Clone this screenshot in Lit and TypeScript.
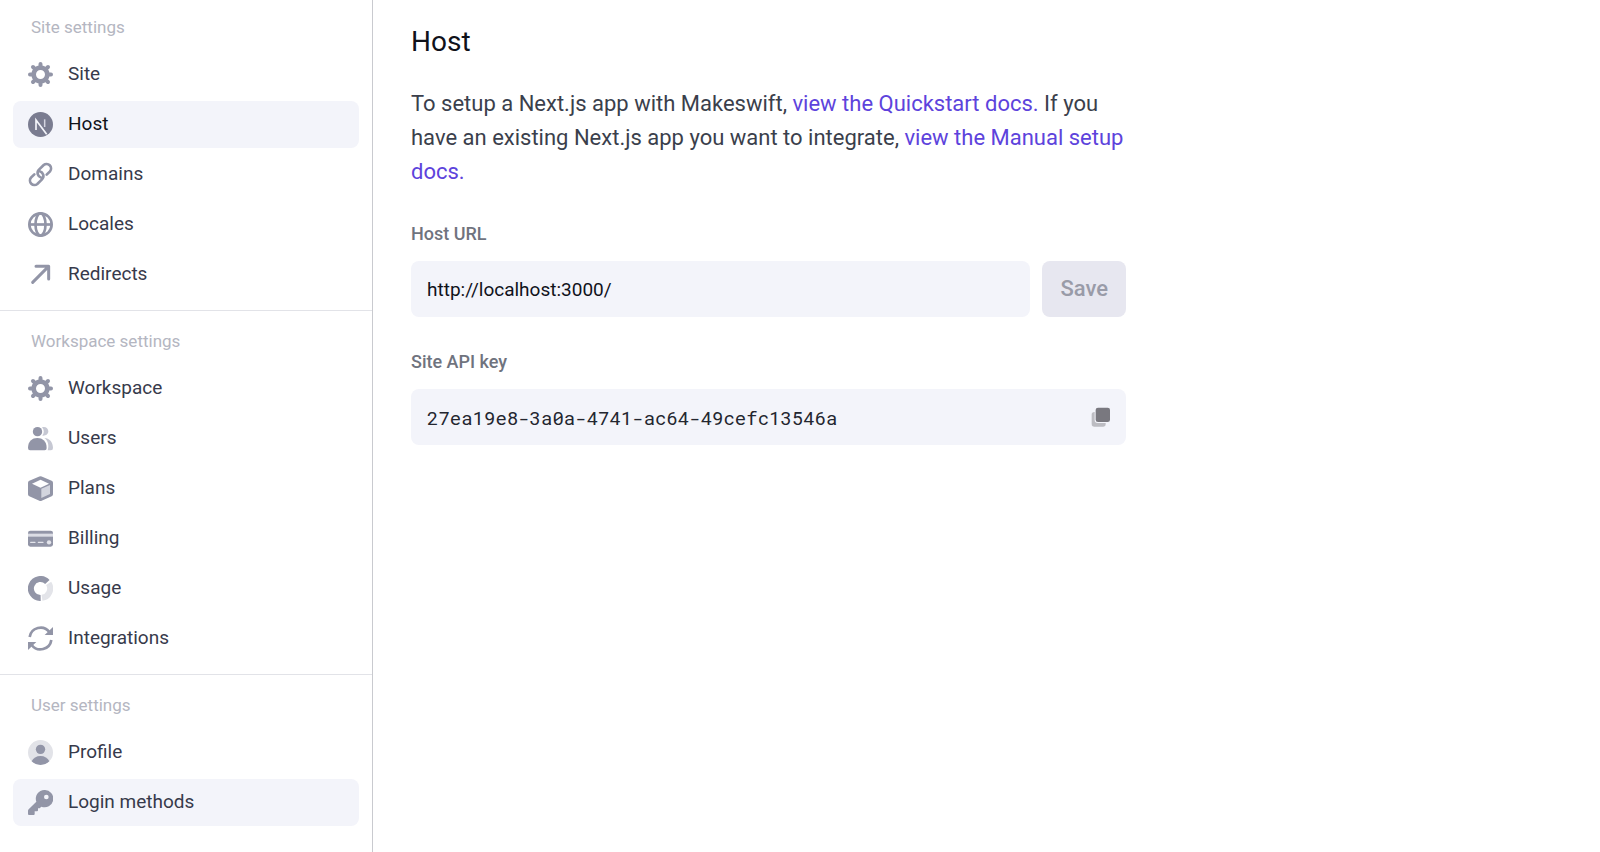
import { LitElement, html, css, svg } from "lit";
import { customElement, property, state } from "lit/decorators.js";
import { classMap } from "lit/directives/class-map.js";

const gear = svg`
  <g fill="none" stroke="currentColor">
    <circle cx="37.5" cy="37.5" r="20.5" stroke-width="14"/>
    <path stroke-width="12" stroke-linecap="round" d="M37.500 14V6M37.500 61V69M14 37.500H6M61 37.500H69M20 20L15 15M55 20L60 15M20 55L15 60M55 55L60 60"/>
  </g>`;

const icons: Record<string, unknown> = {
  gear,
  next: svg`
    <circle cx="37.5" cy="37.5" r="37.5" fill="#7a7c90"/>
    <path d="M24 54V24L56 67" fill="none" stroke="#f3f4fa" stroke-width="5"/>
    <path d="M50 22V45" fill="none" stroke="#d3d4df" stroke-width="4.500"/>`,
  link: svg`
    <g fill="none" stroke="currentColor" stroke-width="8" stroke-linecap="round">
      <path d="M40 47C29 44 25 31 33 23L47 9A13.500 13.500 0 0 1 66 28L56 38"/>
      <path d="M35 28C46 31 50 44 42 52L28 66A13.500 13.500 0 0 1 9 47L19 37"/>
    </g>`,
  globe: svg`
    <g fill="none" stroke="currentColor" stroke-width="8">
      <circle cx="37.5" cy="37.5" r="33.500"/>
      <ellipse cx="37.5" cy="37.5" rx="15" ry="33.500"/>
      <path d="M3 37.500H72"/>
    </g>`,
  arrow: svg`
    <path d="M14 61L61 14M24 13H62V51" fill="none" stroke="currentColor" stroke-width="9" stroke-linecap="round" stroke-linejoin="round"/>`,
  users: svg`
    <path fill="#c6c8d3" d="M42 4C52 0 61 7 61 16S53 30 43 29C49 21 49 12 42 4ZM49 36C64 36 75 49 75 66Q75 73 69 73H59C64 58 60 44 49 36Z"/>
    <circle cx="28.5" cy="17" r="14" fill="currentColor"/>
    <path fill="currentColor" d="M0 66C0 46 12 36 28 36S56 46 56 66Q56 73 50 73H6Q0 73 0 66Z"/>`,
  cube: svg`
    <path fill="currentColor" d="M34 1.500Q37.500 0 41 1.500L71 14Q75 16 75 20V55Q75 59 71 61L41 74Q37.500 76 34 74L4 61Q0 59 0 55V20Q0 16 4 14Z"/>
    <path fill="#fff" d="M37.500 11L63 23L37.500 35L12 23Z"/>
    <path fill="#d3d5de" d="M40 38L66 27V54L40 66Z"/>`,
  card: svg`
    <rect y="14" width="75" height="48" rx="7" fill="currentColor"/>
    <path fill="#dcdde5" d="M0 23H75V32H0Z"/>
    <path d="M8 49H21M31 49H45" stroke="#e4e5ec" stroke-width="4" stroke-linecap="round"/>
    <circle cx="63" cy="49" r="6.500" fill="#e4e5ec"/>`,
  donut: svg`
    <g fill="none" stroke-width="18">
      <path stroke="currentColor" d="M38 66A28.500 28.500 0 1 1 58 18"/>
      <path stroke="#e3e4e9" d="M62 22A28.500 28.500 0 0 1 42 65.500"/>
    </g>`,
  sync: svg`
    <path d="M5 33A33 33 0 0 1 64 18M70 42A33 33 0 0 1 11 57" fill="none" stroke="currentColor" stroke-width="8"/>
    <path fill="currentColor" d="M75 3V27H50ZM0 72V48H25Z"/>`,
  profile: svg`
    <circle cx="37.5" cy="37.5" r="37.5" fill="#e2e3e8"/>
    <circle cx="37.5" cy="28" r="14" fill="currentColor"/>
    <path fill="currentColor" d="M11 64C16 54 25 48 37.500 48S59 54 64 64A37.500 37.500 0 0 1 11 64Z"/>`,
  key: svg`
    <path fill="currentColor" fill-rule="evenodd" d="M49 0A26 26 0 1 1 40 50L35 55H30V61Q30 64 27 64H20V72Q20 75 17 75H3Q0 75 0 72V62Q0 60 2 58L25 35A26 26 0 0 1 49 0ZM55 14A7 7 0 1 0 55 28A7 7 0 1 0 55 14Z"/>`,
};

interface Item {
  label: string;
  icon: string;
}

const sections: { title: string; items: Item[] }[] = [
  {
    title: "Site settings",
    items: [
      { label: "Site", icon: "gear" },
      { label: "Host", icon: "next" },
      { label: "Domains", icon: "link" },
      { label: "Locales", icon: "globe" },
      { label: "Redirects", icon: "arrow" },
    ],
  },
  {
    title: "Workspace settings",
    items: [
      { label: "Workspace", icon: "gear" },
      { label: "Users", icon: "users" },
      { label: "Plans", icon: "cube" },
      { label: "Billing", icon: "card" },
      { label: "Usage", icon: "donut" },
      { label: "Integrations", icon: "sync" },
    ],
  },
  {
    title: "User settings",
    items: [
      { label: "Profile", icon: "profile" },
      { label: "Login methods", icon: "key" },
    ],
  },
];

@customElement("settings-nav")
export class SettingsNav extends LitElement {
  @property() current = "";
  @property() highlighted = "";

  static styles = css`
    :host {
      display: block;
    }
    .section {
      padding: 18px 13px 12px;
      border-top: 1px solid #e2e3e8;
    }
    .section:first-child {
      padding-top: 15px;
      border-top: 0;
    }
    .title {
      margin: 0 0 12px;
      padding-left: 18px;
      font-size: 17px;
      font-weight: 400;
      line-height: 24px;
      color: #b4b6c1;
    }
    .list {
      display: grid;
      gap: 3px;
      margin: 0;
      padding: 0;
      list-style: none;
    }
    .item {
      display: flex;
      align-items: center;
      gap: 15px;
      height: 47px;
      padding: 0 15px;
      border-radius: 8px;
      font-size: 19px;
      line-height: 24px;
      color: #373a4b;
      text-decoration: none;
    }
    .item:hover,
    .filled {
      background: #f3f4fa;
    }
    .current {
      color: #10121a;
    }
    .icon {
      width: 25px;
      height: 25px;
      flex: none;
      color: #9295a7;
    }
    .text {
      padding-bottom: 2px;
    }
  `;

  render() {
    return html`<nav aria-label="Settings">
      ${sections.map(
        (s) => html`<section class="section">
          <h2 class="title">${s.title}</h2>
          <ul class="list">
            ${s.items.map((i) => {
              const current = i.label === this.current;
              return html`<li>
                <a
                  class=${classMap({ item: true, current, filled: current || i.label === this.highlighted })}
                  href="#"
                  aria-current=${current ? "page" : "false"}
                >
                  <svg class="icon" viewBox="0 0 75 75" aria-hidden="true">${icons[i.icon]}</svg>
                  <span class="text">${i.label}</span>
                </a>
              </li>`;
            })}
          </ul>
        </section>`
      )}
    </nav>`;
  }
}

@customElement("app-root")
export class AppRoot extends LitElement {
  @state() private saved = "http://localhost:3000/";
  @state() private url = "http://localhost:3000/";
  private apiKey = "27ea19e8-3a0a-4741-ac64-49cefc13546a";

  static styles = css`
    :host {
      display: grid;
      grid-template-columns: 373px minmax(0, 1fr);
      min-height: 100vh;
      box-sizing: border-box;
      background: #fff;
      font-family: Roboto, "Liberation Sans", sans-serif;
    }
    .side {
      border-right: 1px solid #c9cacf;
    }
    .main {
      padding: 24px 38px;
    }
    .content {
      max-width: 715px;
    }
    .heading {
      margin: 0 0 28px;
      font-size: 28px;
      font-weight: 400;
      line-height: 35px;
      color: #10121a;
    }
    .intro {
      margin: 0 0 33px;
      font-size: 22px;
      line-height: 34px;
      color: #3b3f4c;
    }
    .link {
      color: #5d43dc;
      text-decoration: none;
    }
    .link:hover {
      text-decoration: underline;
    }
    .label {
      display: block;
      margin-bottom: 15px;
      font-size: 18px;
      font-weight: 500;
      line-height: 24px;
      color: #6f737e;
    }
    .row {
      display: flex;
      gap: 12px;
      margin-bottom: 33px;
    }
    .box {
      display: flex;
      align-items: center;
      flex: 1;
      min-width: 0;
      height: 56px;
      box-sizing: border-box;
      padding: 0 15px 0 16px;
      border-radius: 8px;
      background: #f3f4fa;
    }
    .input {
      flex: 1;
      min-width: 0;
      height: 100%;
      padding: 0;
      border: 0;
      outline: 0;
      background: none;
      font-family: inherit;
      font-size: 19px;
      color: #10121a;
    }
    .mono {
      font-family: "Roboto Mono", "DejaVu Sans Mono", "Liberation Mono", monospace;
      color: #23262f;
    }
    .save {
      height: 56px;
      padding: 0 18px 2px;
      border: 0;
      border-radius: 8px;
      background: #5d43dc;
      font-family: inherit;
      font-size: 22px;
      font-weight: 500;
      color: #fff;
    }
    .save:disabled {
      background: #e7e7f0;
      color: #999ba8;
    }
    .copy {
      display: flex;
      padding: 0;
      border: 0;
      background: none;
      cursor: pointer;
    }
    .glyph {
      width: 20px;
      height: 20px;
    }
  `;

  render() {
    return html`
      <aside class="side">
        <settings-nav current="Host" highlighted="Login methods"></settings-nav>
      </aside>
      <main class="main">
        <div class="content">
          <h1 class="heading">Host</h1>
          <p class="intro">
            To setup a Next.js app with Makeswift,
            <a class="link" href="#">view the Quickstart docs.</a> If you have an existing Next.js app you want to
            integrate, <a class="link" href="#">view the Manual setup docs.</a>
          </p>
          <label class="label" for="url">Host URL</label>
          <div class="row">
            <div class="box">
              <input
                class="input"
                id="url"
                type="text"
                .value=${this.url}
                @input=${(e: Event) => (this.url = (e.target as HTMLInputElement).value)}
              />
            </div>
            <button class="save" ?disabled=${this.url === this.saved} @click=${() => (this.saved = this.url)}>
              Save
            </button>
          </div>
          <label class="label" for="key">Site API key</label>
          <div class="row">
            <div class="box">
              <input class="input mono" id="key" type="text" readonly .value=${this.apiKey} />
              <button
                class="copy"
                aria-label="Copy API key"
                @click=${() => navigator.clipboard?.writeText(this.apiKey)}
              >
                <svg class="glyph" viewBox="0 0 60 60" aria-hidden="true">
                  <rect x="2" y="15" width="42" height="44" rx="8" fill="#bcbcc2" />
                  <rect x="11" y="-1" width="50" height="49" rx="9" fill="#f3f4fa" />
                  <rect x="14" y="2" width="43" height="43" rx="7" fill="#79787f" />
                </svg>
              </button>
            </div>
          </div>
        </div>
      </main>
    `;
  }
}
